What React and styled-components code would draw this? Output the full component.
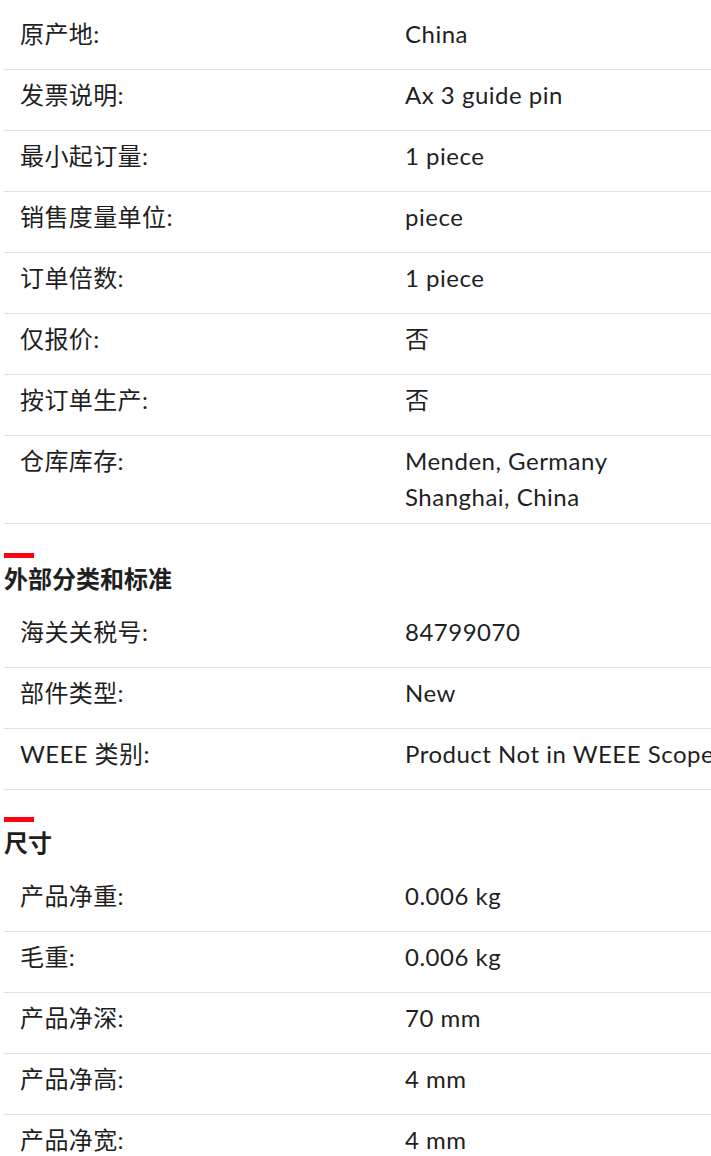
import React from "react";
import styled, { createGlobalStyle } from "styled-components";

const Global = createGlobalStyle`
  html, body { margin: 0; padding: 0; background: #fff; overflow: hidden; }
  body { font-family: "Lato", "Noto Sans CJK SC", sans-serif; color: #1f1f1f; }
`;

const Page = styled.div`
  padding: 9px 0 0 4px;
  width: 780px;
`;

const Section = styled.section`
  margin-top: ${(p) => p.$gap ?? 0}px;
`;

const Heading = styled.h2`
  margin: 0 0 10px;
  font-size: 24px;
  line-height: 36px;
  font-weight: 700;
  &::before {
    content: "";
    display: block;
    width: 30px;
    height: 5px;
    background: #ff000f;
    margin-bottom: 3px;
  }
`;

const Row = styled.div`
  display: grid;
  grid-template-columns: 385px 1fr;
  box-sizing: border-box;
  min-height: 61px;
  padding: 7px 0 8px;
  border-bottom: 1px solid #e0e0e2;
  font-size: 24px;
  line-height: 36px;
`;

const Label = styled.div`
  padding-left: 16px;
  font-weight: 400;
  letter-spacing: 0.4px;
`;

const Value = styled.div`
  padding-left: 16px;
  white-space: nowrap;
  display: flex;
  flex-direction: column;
  letter-spacing: 0.5px;
`;

const general = [
  ["原产地:", ["China"]],
  ["发票说明:", ["Ax 3 guide pin"]],
  ["最小起订量:", ["1 piece"]],
  ["销售度量单位:", ["piece"]],
  ["订单倍数:", ["1 piece"]],
  ["仅报价:", ["否"]],
  ["按订单生产:", ["否"]],
  ["仓库库存:", ["Menden, Germany", "Shanghai, China"]],
];

const classification = [
  ["海关关税号:", ["84799070"]],
  ["部件类型:", ["New"]],
  ["WEEE 类别:", ["Product Not in WEEE Scope"]],
];

const dims = [
  ["产品净重:", ["0.006 kg"]],
  ["毛重:", ["0.006 kg"]],
  ["产品净深:", ["70 mm"]],
  ["产品净高:", ["4 mm"]],
  ["产品净宽:", ["4 mm"]],
];

const Rows = ({ items }) =>
  items.map(([l, vals]) => (
    <Row key={l}>
      <Label>{l}</Label>
      <Value>
        {vals.map((v) => (
          <span key={v}>{v}</span>
        ))}
      </Value>
    </Row>
  ));

export default function App() {
  return (
    <Page>
      <Global />
      <Section>
        <Rows items={general} />
      </Section>
      <Section $gap={29}>
        <Heading>外部分类和标准</Heading>
        <Rows items={classification} />
      </Section>
      <Section $gap={27}>
        <Heading>尺寸</Heading>
        <Rows items={dims} />
      </Section>
    </Page>
  );
}
